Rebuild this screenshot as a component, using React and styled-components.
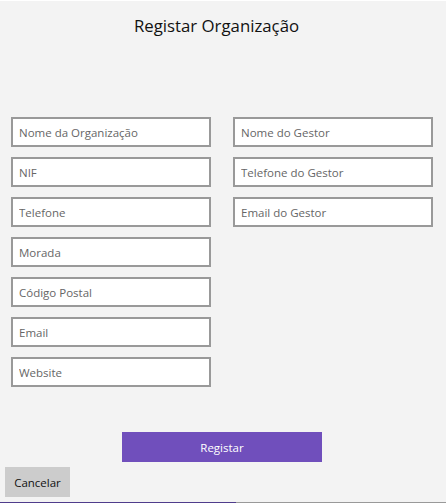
import React from "react";
import styled, { createGlobalStyle } from "styled-components";

const GlobalStyle = createGlobalStyle`
  html, body {
    margin: 0;
    padding: 0;
    background: #f3f3f3;
  }
  * {
    box-sizing: border-box;
  }
`;

const leftFields = [
  "Nome da Organização",
  "NIF",
  "Telefone",
  "Morada",
  "Código Postal",
  "Email",
  "Website",
];

const rightFields = ["Nome do Gestor", "Telefone do Gestor", "Email do Gestor"];

export default function App() {
  return (
    <>
      <GlobalStyle />
      <Page>
        <Title>Registar Organização</Title>
        <Form>
          <Column>
            {leftFields.map((f) => (
              <Field key={f} placeholder={f} />
            ))}
          </Column>
          <Column>
            {rightFields.map((f) => (
              <Field key={f} placeholder={f} />
            ))}
          </Column>
        </Form>
        <Actions>
          <PrimaryButton>Registar</PrimaryButton>
        </Actions>
        <CancelButton>Cancelar</CancelButton>
        <Progress>
          <ProgressFill style={{ width: "53%" }} />
        </Progress>
      </Page>
    </>
  );
}

const Page = styled.div`
  width: 446px;
  height: 503px;
  border-top: 1px solid #fff;
  background: #f3f3f3;
  display: flex;
  flex-direction: column;
  font-family: "Open Sans", "Noto Sans", sans-serif;
  position: relative;
`;

const Title = styled.h1`
  margin: 13px 0 0;
  padding-right: 13px;
  text-align: center;
  font-size: 16.8px;
  font-weight: 400;
  line-height: 24px;
  color: #111;
`;

const Form = styled.div`
  display: flex;
  gap: 22px;
  padding: 79px 0 0 11px;
`;

const Column = styled.div`
  display: flex;
  flex-direction: column;
  gap: 10px;
`;

const Field = styled.input`
  width: 200px;
  height: 30px;
  border: 2px solid #999;
  background: #fff;
  padding: 0 6px;
  font-family: "Open Sans", "Noto Sans", sans-serif;
  font-size: 11.5px;
  color: #222;
  outline: none;
  &::placeholder {
    color: #666;
  }
`;

const Actions = styled.div`
  display: flex;
  padding: 45px 0 0 122px;
`;

const PrimaryButton = styled.button`
  width: 200px;
  height: 30px;
  border: none;
  background: #704fbc;
  color: #fff;
  font-family: "Open Sans", "Noto Sans", sans-serif;
  font-size: 11.5px;
`;

const CancelButton = styled.button`
  align-self: flex-start;
  margin: 5px 0 0 5px;
  width: 65px;
  height: 30px;
  border: none;
  background: #ccc;
  color: #111;
  font-family: "Open Sans", "Noto Sans", sans-serif;
  font-size: 11.5px;
  padding: 0;
`;

const Progress = styled.div`
  position: absolute;
  left: 0;
  right: 0;
  bottom: 0;
  height: 1px;
  background: #999;
`;

const ProgressFill = styled.div`
  height: 100%;
  background: #4f3c8c;
`;
